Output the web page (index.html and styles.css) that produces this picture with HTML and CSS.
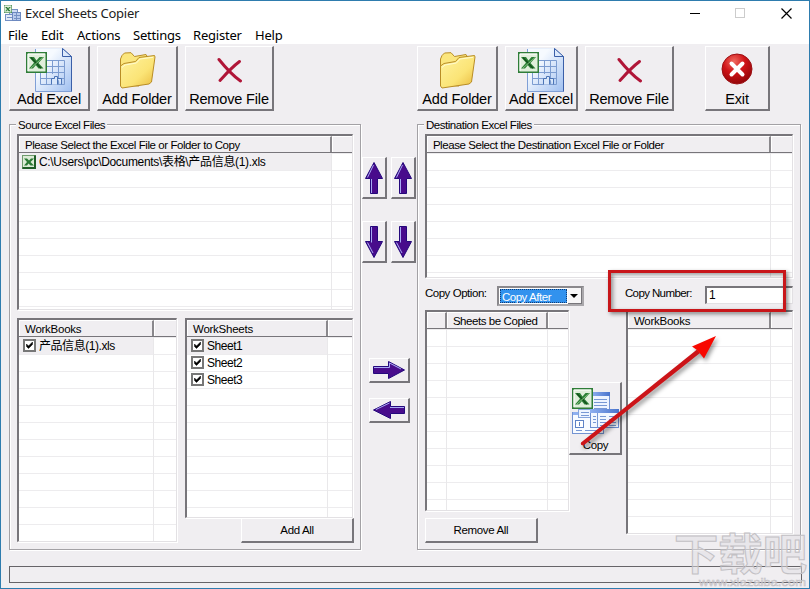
FILE: index.html
```html
<!DOCTYPE html>
<html lang="en">
<head>
    <meta charset="UTF-8">
    <title>Excel Sheets Copier</title>
    <link rel="stylesheet" href="styles.css">
</head>
<body>
    <!-- Shared icons -->
    <svg class="defs" width="0" height="0">
        <defs>
            <linearGradient id="paper" x1="0" y1="0" x2="1" y2="1">
                <stop offset="0.3" stop-color="#f6faff"/>
                <stop offset="1" stop-color="#9fbff0"/>
            </linearGradient>
            <linearGradient id="gold" x1="0" y1="0" x2="1" y2="1">
                <stop offset="0" stop-color="#fff3a0"/>
                <stop offset="0.6" stop-color="#fbe476"/>
                <stop offset="1" stop-color="#e9b93c"/>
            </linearGradient>
            <linearGradient id="blueBar" x1="0" y1="0" x2="1" y2="0">
                <stop offset="0" stop-color="#8fb0f0"/>
                <stop offset="1" stop-color="#4a74cc"/>
            </linearGradient>
            <radialGradient id="redBall" cx="0.4" cy="0.25" r="0.8">
                <stop offset="0" stop-color="#f06a60"/>
                <stop offset="0.45" stop-color="#d01418"/>
                <stop offset="1" stop-color="#8c0408"/>
            </radialGradient>
        </defs>
        <symbol id="xl" viewBox="0 0 21 21">
            <rect x="0.75" y="0.75" width="19.5" height="19.5" fill="#e0efdb" stroke="#2f7d38" stroke-width="1.5"/>
            <path d="M2 19V2H19" fill="none" stroke="#fff"/>
            <path d="M3 5H8L10.500 8.500L13.500 5H18L12.500 11L17.500 16.500H12.500L9.800 13.200L7 16.500H3L8 10.700Z" fill="#2c8136"/>
            <path d="M5 5.500L15 16.200" stroke="#134f1c" stroke-width="1.300"/>
            <path d="M17 5.500L5 16" stroke="#8cc487" stroke-width="0.900"/>
        </symbol>
        <symbol id="xlSmall" viewBox="0 0 14 14">
            <rect x="0.500" y="0.500" width="13" height="13" fill="#dcebd6" stroke="#6f9a6c"/>
            <path d="M13 0.500V13H0.500" fill="none" stroke="#1f5e27" stroke-width="2"/>
            <path d="M2 3.500H5L7 5.500L9 3.500H12L8.500 7L12 10.500H8.500L6.500 8.500L5 10.500H2L5 7Z" fill="#2c7a35"/>
        </symbol>
        <symbol id="excelFile" viewBox="0 0 46 44">
            <path d="M9.500 0.500H36.500L45.500 8.500V43.500H9.500Z" fill="url(#paper)" stroke="#7f9fd6"/>
            <path d="M9 0.500H36" stroke="#e8effa"/>
            <path d="M36.500 0.500V8.500H45.500Z" fill="#dce9fb" stroke="#3b5fa8"/>
            <path d="M45.500 8.500V43.500" stroke="#3b5fa8" stroke-width="1"/>
            <path d="M20 12.500H38.500V36.500H14.500V24M26.500 12V26M32.500 12V36M20.500 12V36M20 18.500H38M14 24.500H38M14 30.500H38" fill="none" stroke="#7c9cd0"/>
            <path d="M25.500 36.500V30.500H28.500V28.500H31.500V36.500M31.500 30.500H35.500V36.500" fill="#d9e7fa" stroke="#4b74b6"/>
            <use href="#xl" x="0" y="4" width="21" height="21"/>
        </symbol>
        <symbol id="folder" viewBox="0 0 37 37">
            <path d="M1.500 33V7L3 3.500L5.500 1L12 0.700L15.500 4.500L27 2.500L28.500 5V12L20 34Z" fill="#fbe67e" stroke="#b98d26"/>
            <path d="M1.500 14L5 11.500L16.500 9.500L20 5.500L35.500 3.500L36 5L32.500 30L30 32L3 36L1.500 34Z" fill="url(#gold)" stroke="#b98d26"/>
            <path d="M3 15.500L6 13L17.500 11L21 7L34 5.300" fill="none" stroke="#fffbd0"/>
        </symbol>
        <symbol id="cross" viewBox="0 0 25 26">
            <path d="M2 2.500C8 10 15 18 23.500 24" fill="none" stroke="#b01638" stroke-width="3" stroke-linecap="round"/>
            <path d="M22.500 4.500C14 11 8 18 3 23.500" fill="none" stroke="#b01638" stroke-width="3" stroke-linecap="round"/>
        </symbol>
        <symbol id="arrowUp" viewBox="0 0 18 32">
            <path d="M9 0.500L17.500 16.500H12.500V31.500H5.500V16.500H0.500Z" fill="#480c8c" stroke="#24087c"/>
            <path d="M8.500 3L2.500 15.500M6.500 17V31" stroke="#a8aaf4" fill="none"/>
        </symbol>
        <symbol id="arrowDown" viewBox="0 0 18 32">
            <path d="M9 31.500L17.500 15.500H12.500V0.500H5.500V15.500H0.500Z" fill="#480c8c" stroke="#24087c"/>
            <path d="M6.500 1V16.500M2.500 16.500L8 27" stroke="#a8aaf4" fill="none"/>
        </symbol>
        <symbol id="arrowRight" viewBox="0 0 32 18">
            <path d="M31.500 9L15.500 0.500V5.500H0.500V12.500H15.500V17.500Z" fill="#480c8c" stroke="#24087c"/>
            <path d="M1 6.500H16.500V2L28 8" stroke="#a8aaf4" fill="none"/>
        </symbol>
        <symbol id="arrowLeft" viewBox="0 0 32 18">
            <path d="M0.500 9L17.500 0.500V5.500H31.500V12.500H17.500V17.500Z" fill="#480c8c" stroke="#24087c"/>
            <path d="M3 8.500L16.500 2M17 6.500H31" stroke="#a8aaf4" fill="none"/>
        </symbol>
        <symbol id="tick" viewBox="0 0 13 13">
            <rect x="1" y="1" width="11" height="11" fill="#fff" stroke="#777" stroke-width="2"/>
            <path d="M3.500 5V7.500L5.500 9.500L9.500 5.500V3L5.500 7Z" fill="#000" stroke="#000" stroke-width="0.500"/>
        </symbol>
    </svg>

    <div class="window">
        <header class="titlebar">
            <svg class="app-icon" width="17" height="17" viewBox="0 0 17 17">
                <rect x="5.500" y="4.500" width="8" height="8" fill="#cfdcf3" stroke="#7591c4"/>
                <rect x="1.500" y="9.500" width="9" height="6" fill="#e3eaf7" stroke="#7591c4"/>
                <rect x="8.500" y="7.500" width="8" height="8" fill="#b9cbed" stroke="#6d89c0"/>
                <path d="M10 10.500H16M10 13.500H16M12.500 8V15M3 12.500H8" stroke="#7591c4"/>
                <use href="#xl" x="0" y="0" width="8" height="8"/>
            </svg>
            <span class="title">Excel Sheets Copier</span>
            <svg class="controls" width="102" height="11" viewBox="0 0 102 11">
                <path d="M0 5.500H10" stroke="#000"/>
                <rect x="45.500" y="0.500" width="9" height="9" fill="none" stroke="#ccc"/>
                <path d="M91.500 0.500L101.500 10.500M101.500 0.500L91.500 10.500" stroke="#000" stroke-width="1.200"/>
            </svg>
        </header>

        <nav class="menu">
            <span class="m-file">File</span>
            <span class="m-edit">Edit</span>
            <span class="m-actions">Actions</span>
            <span class="m-settings">Settings</span>
            <span class="m-register">Register</span>
            <span>Help</span>
        </nav>

        <div class="toolbar">
            <button class="tool w81"><svg width="46" height="44"><use href="#excelFile"/></svg>Add Excel</button>
            <button class="tool w81"><svg class="i-folder" width="37" height="37"><use href="#folder"/></svg>Add Folder</button>
            <button class="tool w89"><svg class="i-cross" width="25" height="26"><use href="#cross"/></svg>Remove File</button>
            <button class="tool w81 dest"><svg class="i-folder" width="37" height="37"><use href="#folder"/></svg>Add Folder</button>
            <button class="tool w73"><svg width="46" height="44"><use href="#excelFile"/></svg>Add Excel</button>
            <button class="tool w89"><svg class="i-cross" width="25" height="26"><use href="#cross"/></svg>Remove File</button>
            <button class="tool w65 exit">
                <svg class="i-exit" width="32" height="32" viewBox="0 0 32 32">
                    <circle cx="16" cy="16" r="15" fill="url(#redBall)" stroke="#9c1014"/>
                    <path d="M10.500 10.500L21.500 21.500M21.500 10.500L10.500 21.500" stroke="#fff" stroke-width="4" stroke-linecap="round"/>
                </svg>Exit
            </button>
        </div>

        <main class="main">
            <section class="group source">
                <h2 class="legend">Source Excel Files</h2>
                <div class="list source-files">
                    <div class="head"><span class="c313">Please Select the Excel File or Folder to Copy</span><span class="rest"></span></div>
                    <div class="rows">
                        <div class="col c313">
                            <div class="item selected path"><svg width="14" height="14"><use href="#xlSmall"/></svg>C:\Users\pc\Documents\表格\产品信息(1).xls</div>
                        </div>
                    </div>
                </div>
                <div class="pair">
                    <div class="list books">
                        <div class="head"><span class="c135">WorkBooks</span><span class="rest"></span></div>
                        <div class="rows">
                            <div class="col c135">
                                <div class="item selected"><svg width="13" height="13"><use href="#tick"/></svg>产品信息(1).xls</div>
                            </div>
                        </div>
                    </div>
                    <div class="sheets-side">
                        <div class="list sheets">
                            <div class="head"><span class="c141">WorkSheets</span><span class="rest"></span></div>
                            <div class="rows">
                                <div class="col c141">
                                    <div class="item selected"><svg width="13" height="13"><use href="#tick"/></svg>Sheet1</div>
                                    <div class="item"><svg width="13" height="13"><use href="#tick"/></svg>Sheet2</div>
                                    <div class="item"><svg width="13" height="13"><use href="#tick"/></svg>Sheet3</div>
                                </div>
                            </div>
                        </div>
                        <button class="btn add-all">Add All</button>
                    </div>
                </div>
            </section>

            <div class="movers">
                <div class="mover-row">
                    <button class="arrow"><svg width="18" height="32"><use href="#arrowUp"/></svg></button>
                    <button class="arrow"><svg width="18" height="32"><use href="#arrowUp"/></svg></button>
                </div>
                <div class="mover-row second">
                    <button class="arrow"><svg width="18" height="32"><use href="#arrowDown"/></svg></button>
                    <button class="arrow"><svg width="18" height="32"><use href="#arrowDown"/></svg></button>
                </div>
                <button class="arrow wide to-right"><svg width="32" height="18"><use href="#arrowRight"/></svg></button>
                <button class="arrow wide to-left"><svg width="32" height="18"><use href="#arrowLeft"/></svg></button>
            </div>

            <section class="group destination">
                <h2 class="legend">Destination Excel Files</h2>
                <div class="list dest-files">
                    <div class="head"><span class="c344">Please Select the Destination Excel File or Folder</span><span class="rest"></span></div>
                    <div class="rows"><div class="col c344"></div></div>
                </div>
                <div class="options">
                    <span class="label option-label">Copy Option:</span>
                    <div class="select">
                        <span class="value">Copy After</span>
                        <span class="drop"><svg width="8" height="4" viewBox="0 0 8 4"><path d="M0 0H8L4 4Z"/></svg></span>
                    </div>
                    <span class="label number-label">Copy Number:</span>
                    <div class="number">1</div>
                </div>
                <div class="copy-area">
                    <div class="left-side">
                        <div class="list copied">
                            <div class="head"><span class="c20"></span><span class="c101">Sheets be Copied</span><span class="rest"></span></div>
                            <div class="rows"><div class="col c20"></div><div class="col c101"></div></div>
                        </div>
                        <button class="btn remove-all">Remove All</button>
                    </div>
                    <button class="copy">
                        <svg width="47" height="47" viewBox="0 0 47 47">
                            <rect x="18.500" y="4.500" width="19" height="20" fill="#eef4ff" stroke="#7393d2"/>
                            <rect x="19" y="4" width="19" height="4" fill="url(#blueBar)"/>
                            <path d="M22 11.500H35M22 14.500H35M22 17.500H35M22 20.500H35" stroke="#7898d4"/>
                            <rect x="0.500" y="24.500" width="31" height="21" fill="#f8fbff" stroke="#7393d2"/>
                            <rect x="1" y="24" width="31" height="3" fill="#8fb0f0"/>
                            <rect x="6.500" y="21.500" width="12" height="8" fill="#eef4ff" stroke="#86a4dc"/>
                            <path d="M9 24.500H17M9 27.500H17M4 42.500H10M13 42.500H27" stroke="#7898d4"/>
                            <rect x="3.500" y="32.500" width="8" height="7" fill="#fff" stroke="#5f83c6"/>
                            <path d="M7.500 34V38" stroke="#5f83c6"/>
                            <rect x="18.500" y="22.500" width="28" height="17" fill="#f2f7ff" stroke="#6b8dd0"/>
                            <rect x="18" y="21" width="29" height="4" fill="url(#blueBar)"/>
                            <path d="M25.500 25V40M21 28.500H24M21 31.500H24M21 34.500H24M28 28.500H34M28 31.500H34M28 34.500H34M28 37.500H34M37 28.500H44M37 31.500H44M37 34.500H44M37 37.500H44" stroke="#7898d4"/>
                            <use href="#xl" x="0" y="0" width="21" height="21"/>
                        </svg>
                        <span>Copy</span>
                    </button>
                    <div class="list dest-books">
                        <div class="head"><span class="c143">WorkBooks</span><span class="rest"></span></div>
                        <div class="rows"><div class="col c143"></div></div>
                    </div>
                </div>
            </section>
        </main>

        <footer class="status"></footer>
    </div>

    <!-- Highlight, pointer and site mark over the window -->
    <div class="highlight"></div>
    <svg class="pointer" width="150" height="122" viewBox="0 0 150 122">
        <path d="M6 112.500L122 19.500L125 23L8.500 115.500Q5 115.500 6 112.500Z" fill="#cc1418"/>
        <path d="M141 6L117 16.500L122 20L125 23.500L129 28.500Z" fill="#f80800"/>
    </svg>
    <svg class="mark" width="136" height="76" viewBox="0 0 136 76">
        <text class="mark-name" x="0" y="57" textLength="133" lengthAdjust="spacingAndGlyphs">下载吧</text>
        <text class="mark-url" x="25" y="73" textLength="107" lengthAdjust="spacingAndGlyphs">www.xiazaiba.com</text>
    </svg>
</body>
</html>
```

FILE: styles.css
```css
* {
    box-sizing: border-box;
}
body {
    margin: 0;
    width: 810px;
    height: 589px;
    position: relative;
    overflow: hidden;
    font-family: "Liberation Sans", "Noto Sans CJK SC", sans-serif;
    font-size: 12px;
    color: #000;
}
svg {
    display: block;
    flex: none;
}
button {
    padding: 0;
    font-family: inherit;
    color: inherit;
}
.defs {
    position: absolute;
}
.window {
    width: 810px;
    height: 589px;
    border: 1px solid #2e7cae;
    background: #f0eef1;
}

/* title and menu */
.titlebar {
    display: flex;
    height: 24px;
    padding: 4px 17px 0 3px;
    background: #fff;
}
.title {
    flex: 1;
    margin-left: 4px;
    font: 13px/16px "Noto Sans", sans-serif;
    letter-spacing: -0.22px;
    color: #222;
}
.controls {
    margin-top: 3px;
}
.menu {
    display: flex;
    height: 19px;
    padding-left: 7px;
    background: #fff;
    font: 13px/20px "Noto Sans", sans-serif;
    letter-spacing: -0.2px;
}
.m-file { width: 33px; }
.m-edit { width: 36px; }
.m-actions { width: 56px; }
.m-settings { width: 60px; }
.m-register { width: 62px; }

/* toolbar */
.toolbar {
    display: flex;
    gap: 7px;
    padding: 2px 0 0 8px;
}
.tool, .btn, .arrow, .copy {
    border: 1px solid #fff;
    border-right: 2px solid #77757a;
    border-bottom: 2px solid #77757a;
    background: #f0eef1;
}
.tool {
    display: flex;
    flex-direction: column;
    align-items: center;
    justify-content: space-between;
    height: 65px;
    padding: 1px 0 2px;
    font-size: 14.5px;
    line-height: 15px;
    letter-spacing: -0.15px;
    white-space: nowrap;
}
.w81 { width: 81px; }
.w89 { width: 89px; }
.w73 { width: 73px; }
.w65 { width: 65px; }
.dest { margin-left: 136px; }
.exit { margin-left: 24px; }
.i-folder { margin-top: 4px; }
.i-cross { margin-top: 9px; }
.i-exit { margin-top: 5px; }

/* group boxes */
.main {
    display: flex;
    height: 426px;
    margin: 13px 8px 0;
}
.group {
    position: relative;
    padding: 9px 7px 0;
    border: 1px solid #a3a1a5;
    box-shadow: 1px 1px 0 #fff, inset 1px 1px 0 #fff;
}
.source { width: 352px; }
.destination { width: 385px; }
.legend {
    position: absolute;
    top: -8px;
    left: 6px;
    margin: 0;
    padding: 0 2px;
    background: #f0eef1;
    font-size: 11.5px;
    font-weight: normal;
    line-height: 16px;
    letter-spacing: -0.45px;
}

/* list views */
.list {
    display: flex;
    flex: none;
    flex-direction: column;
    border: 1px solid #e3e1e4;
    border-top: 2px solid #77757a;
    border-left: 2px solid #77757a;
    background: #fff;
    box-shadow: 1px 1px 0 #fff;
    overflow: hidden;
}
.head {
    display: flex;
    flex: none;
    height: 17px;
    border-bottom: 1px solid #77757a;
    background: #f0eef1;
    font-size: 11.5px;
    line-height: 17px;
    letter-spacing: -0.43px;
    white-space: nowrap;
}
.head span {
    flex: none;
    padding-left: 5px;
    border-right: 2px solid #8a888c;
    border-top: 1px solid #fff;
    border-left: 1px solid #fff;
}
.head .rest {
    flex: 1;
    border-right: 0;
}
.rows {
    display: flex;
    flex: 1;
    background: repeating-linear-gradient(#edecee 0 1px, #fff 1px 17px);
}
.col {
    flex: none;
    border-right: 1px solid #e9e8ea;
}
.item {
    display: flex;
    align-items: center;
    gap: 3px;
    height: 17px;
    padding-left: 4px;
    line-height: 16px;
    letter-spacing: -0.45px;
    white-space: nowrap;
}
.selected {
    background: #f0eef1;
}
.path {
    padding-left: 3px;
    letter-spacing: -0.32px;
}
.c20 { width: 20px; }
.c101 { width: 101px; }
.c135 { width: 135px; }
.c141 { width: 141px; }
.c143 { width: 143px; }
.c313 { width: 313px; }
.c344 { width: 344px; }

.books .head, .sheets .head, .dest-books .head {
    letter-spacing: -0.25px;
}
.source-files {
    width: 336px;
    height: 176px;
}
.pair {
    display: flex;
    gap: 8px;
    margin-top: 8px;
}
.books {
    width: 160px;
    height: 224px;
}
.sheets {
    width: 168px;
    height: 200px;
}
.sheets-side {
    display: flex;
    flex: none;
    flex-direction: column;
    width: 169px;
}
.btn {
    width: 113px;
    height: 25px;
    font-size: 11.5px;
    letter-spacing: -0.35px;
}
.add-all {
    align-self: flex-end;
}

/* arrows between the groups */
.movers {
    width: 56px;
    padding: 33px 0 0 1px;
}
.mover-row {
    display: flex;
    gap: 4px;
}
.second {
    margin-top: 22px;
}
.arrow {
    display: flex;
    align-items: center;
    justify-content: center;
    width: 25px;
    height: 42px;
}
.wide {
    width: 41px;
    height: 25px;
    margin-left: 7px;
}
.to-right { margin-top: 95px; }
.to-left { margin-top: 15px; }

/* destination */
.dest-files {
    width: 368px;
    height: 144px;
}
.options {
    display: flex;
    height: 32px;
    padding-top: 8px;
}
.label {
    font-size: 11.5px;
    line-height: 15px;
    letter-spacing: -0.45px;
}
.option-label { width: 72px; }
.number-label {
    width: 80px;
    margin-left: 41px;
    letter-spacing: -0.6px;
}
.select {
    display: flex;
    width: 87px;
    height: 20px;
    border: 2px solid #8a888c;
    border-right-color: #aaa8ac;
    border-bottom-color: #aaa8ac;
    background: #fff;
}
.value {
    width: 67px;
    margin: 1px;
    padding-left: 1px;
    border: 1px dotted #123a70;
    background: #3292ee;
    color: #fff;
    font-size: 11.5px;
    line-height: 14px;
    letter-spacing: -0.45px;
}
.drop {
    display: flex;
    flex: 1;
    align-items: center;
    justify-content: center;
    border-right: 1px solid #77757a;
    border-bottom: 1px solid #77757a;
    background: #f7f6f7;
}
.number {
    width: 88px;
    height: 18px;
    padding-left: 2px;
    border: 1px solid #e3e1e4;
    border-top: 2px solid #77757a;
    border-left: 2px solid #77757a;
    background: #fff;
    line-height: 15px;
}
.copy-area {
    display: flex;
}
.left-side {
    width: 144px;
}
.copied {
    width: 144px;
    height: 201px;
}
.remove-all {
    display: block;
    margin-top: 7px;
}
.copy {
    display: flex;
    flex-direction: column;
    align-items: center;
    width: 53px;
    height: 73px;
    margin-top: 72px;
    padding: 5px 0 0 1px;
    font-size: 11.5px;
    line-height: 20px;
    letter-spacing: -0.4px;
}
.dest-books {
    width: 167px;
    height: 224px;
    margin-left: 4px;
}
.status {
    height: 17px;
    margin: 16px 7px 0 8px;
    border: 1px solid #666468;
}

/* overlays */
.highlight {
    position: absolute;
    left: 608px;
    top: 270px;
    width: 178px;
    height: 42px;
    border: 3px solid #c8161a;
    box-shadow: 2px 2px 4px rgba(0, 0, 0, 0.45), inset 2px 2px 4px rgba(0, 0, 0, 0.4);
}
.pointer {
    position: absolute;
    left: 575px;
    top: 330px;
    filter: drop-shadow(2px 3px 2px rgba(0, 0, 0, 0.4));
}
.mark {
    position: absolute;
    left: 674px;
    top: 513px;
}
.mark text {
    font-family: "Noto Sans CJK SC", sans-serif;
    fill: rgba(225, 223, 227, 0.5);
    stroke: #c2c0c4;
    stroke-width: 1px;
}
.mark .mark-name {
    font-size: 43px;
    font-weight: bold;
}
.mark .mark-url {
    font-family: "Liberation Sans", sans-serif;
    font-size: 11px;
    stroke-width: 0.5px;
}
```
